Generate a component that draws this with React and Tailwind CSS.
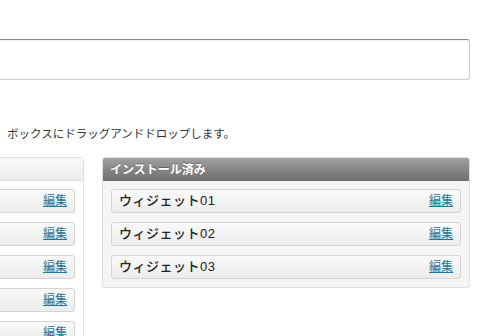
const font = { fontFamily: '"Liberation Sans", "Noto Sans CJK JP", sans-serif' };

// left column is cut off by the window, its labels fall outside the view
const available = [1, 2, 3, 4, 5];
const installed = ["ウィジェット01", "ウィジェット02", "ウィジェット03"];

function WidgetItem({ label }) {
  return (
    <div className="flex h-[24px] items-center justify-between rounded-[3px] border border-[#d4d4d4] bg-gradient-to-b from-[#f9f9f9] to-[#ececec] px-[7px]">
      <span className="text-[13px] font-medium tracking-[0.5px] text-[#222]">{label}</span>
      <a href="#" className="text-[12px] text-[#21759b] underline">
        編集
      </a>
    </div>
  );
}

export default function App() {
  return (
    <div className="h-[336px] w-[479px] overflow-hidden bg-white" style={font}>
      <div className="ml-[-130px] w-[600px] pt-[39px]">
        {/* search box */}
        <div className="h-[41px] w-full rounded-[3px] border border-[#cccccc] border-t-[#8a8a8a] bg-white shadow-[inset_0_1px_2px_rgba(0,0,0,0.07)]"></div>

        <p className="mt-[46px] pl-[137px] text-[11.5px] leading-[16px] text-[#333]">
          ボックスにドラッグアンドドロップします。
        </p>

        <div className="mt-[15px] flex items-start gap-[18px]">
          {/* available widgets */}
          <div className="w-[214px] shrink-0 rounded-[3px] border border-[#dfdfdf] bg-white">
            <div className="h-[23px] border-b border-[#dfdfdf] bg-gradient-to-b from-[#f9f9f9] to-[#ececec]"></div>
            <div className="flex flex-col gap-[9px] p-[8px]">
              {available.map((item) => (
                <WidgetItem key={item} label="" />
              ))}
            </div>
          </div>

          {/* installed widgets */}
          <div className="w-[368px] shrink-0 rounded-[3px] border border-[#dfdfdf] bg-[#f5f5f5]">
            <div className="flex h-[23px] items-center rounded-t-[2px] bg-gradient-to-b from-[#a0a0a0] to-[#6e6e6e] px-[7px] text-[12px] font-bold text-white [text-shadow:0_-1px_0_rgba(0,0,0,0.3)]">
              インストール済み
            </div>
            <div className="flex flex-col gap-[9px] p-[8px]">
              {installed.map((item) => (
                <WidgetItem key={item} label={item} />
              ))}
            </div>
          </div>
        </div>
      </div>
    </div>
  );
}
